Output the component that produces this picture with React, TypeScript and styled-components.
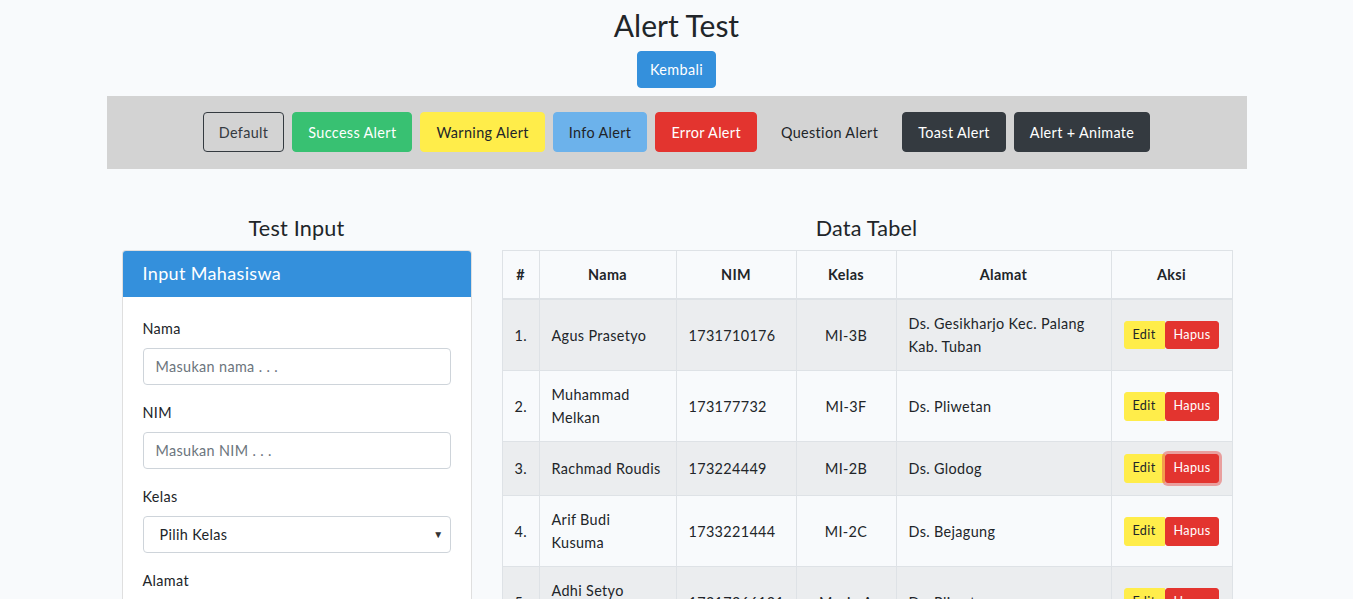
import React from "react";
import styled, { createGlobalStyle, css } from "styled-components";

const Global = createGlobalStyle`
  html, body { margin: 0; padding: 0; overflow: hidden; }
  body {
    background: #f8fafc;
    color: #212529;
    font-family: Lato, "Noto Sans", sans-serif;
    font-size: 14.4px;
    line-height: 1.6;
    letter-spacing: 0.35px;
  }
  * { box-sizing: border-box; }
`;

const Page = styled.div`
  padding-top: 7px;
`;

const Header = styled.header`
  display: flex;
  flex-direction: column;
  align-items: center;
`;

const Title = styled.h1`
  margin: 0 0 8px;
  font-size: 30px;
  font-weight: 400;
  line-height: 36px;
  letter-spacing: 0;
`;

const PrimaryButton = styled.button`
  font-family: inherit;
  font-size: 14.4px;
  letter-spacing: inherit;
  line-height: 1.6;
  padding: 6px 12px;
  border: 1px solid #3490dc;
  border-radius: 4px;
  background: #3490dc;
  color: #fff;
  margin-bottom: 8px;
`;

const Container = styled.div`
  width: 1140px;
  margin: 0 auto;
`;

const AlertBar = styled.div`
  background: #d3d3d3;
  display: flex;
  justify-content: center;
  gap: 8px;
  padding: 16px 0 17px;
`;

type Variant = "outline" | "success" | "warning" | "info" | "danger" | "plain" | "dark";

const variants: Record<Variant, ReturnType<typeof css>> = {
  outline: css`background: transparent; color: #343a40; border-color: #343a40;`,
  success: css`background: #38c172; color: #fff; border-color: #38c172;`,
  warning: css`background: #ffed4a; color: #212529; border-color: #ffed4a;`,
  info: css`background: #6cb2eb; color: #212529; border-color: #6cb2eb;`,
  danger: css`background: #e3342f; color: #fff; border-color: #e3342f;`,
  plain: css`background: transparent; color: #212529; border-color: transparent;`,
  dark: css`background: #343a40; color: #fff; border-color: #343a40;`,
};

const AlertButton = styled.button<{ $v: Variant }>`
  font-family: inherit;
  font-size: 14.4px;
  letter-spacing: inherit;
  line-height: 1.6;
  height: 40px;
  padding: 0 15px;
  border: 1px solid transparent;
  border-radius: 4px;
  ${(p) => variants[p.$v]}
`;

const Row = styled.div`
  display: grid;
  grid-template-columns: 350px 730px;
  column-gap: 30px;
  padding: 47px 15px 0;
  align-items: start;
`;

const Column = styled.section`
  display: flex;
  flex-direction: column;
`;

const SectionTitle = styled.h4`
  margin: 0 0 8px;
  font-size: 21.6px;
  font-weight: 400;
  line-height: 1.2;
  text-align: center;
  letter-spacing: 0.2px;
`;

const Card = styled.div`
  background: #fff;
  border: 1px solid rgba(0, 0, 0, 0.125);
  border-radius: 4px;
  overflow: hidden;
`;

const CardHeader = styled.h5`
  margin: 0;
  background: #3490dc;
  color: #fff;
  font-size: 18px;
  font-weight: 400;
  line-height: 1.2;
  padding: 12px 20px;
`;

const CardBody = styled.div`
  padding: 20px;
`;

const FormGroup = styled.div`
  margin-bottom: 16px;
`;

const Label = styled.label`
  display: block;
  margin-bottom: 8px;
`;

const fieldStyle = css`
  display: block;
  width: 100%;
  height: 37px;
  padding: 6px 12px;
  font-family: inherit;
  font-size: 14.4px;
  letter-spacing: inherit;
  line-height: 1.6;
  color: #495057;
  background: #fff;
  border: 1px solid #ced4da;
  border-radius: 4px;
`;

const Input = styled.input`
  ${fieldStyle}
  &::placeholder { color: #6c757d; }
`;

const SelectWrap = styled.div`
  position: relative;
`;

const Select = styled.select`
  ${fieldStyle}
  appearance: none;
  -webkit-appearance: none;
  padding-left: 16px;
  color: #212529;
`;

const SelectArrow = styled.span`
  position: absolute;
  right: 7px;
  top: 50%;
  transform: translateY(-50%);
  font-size: 10px;
  line-height: 1;
  color: #333;
  pointer-events: none;
`;

const Table = styled.table`
  width: 730px;
  table-layout: fixed;
  border-collapse: collapse;
  color: #212529;
`;

const Th = styled.th`
  border: 1px solid #dee2e6;
  border-bottom-width: 2px;
  padding: 12px;
  font-weight: 700;
  text-align: center;
  vertical-align: middle;
`;

const Tr = styled.tr<{ $striped: boolean }>`
  background: ${(p) => (p.$striped ? "rgba(0,0,0,0.05)" : "transparent")};
`;

const Td = styled.td<{ $center?: boolean }>`
  border: 1px solid #dee2e6;
  padding: 12px;
  vertical-align: middle;
  text-align: ${(p) => (p.$center ? "center" : "left")};
`;

const ActionGroup = styled.div`
  display: inline-flex;
  vertical-align: middle;
`;

const SmallButton = styled.button<{ $kind: "edit" | "delete"; $focus?: boolean }>`
  font-family: inherit;
  font-size: 12.6px;
  letter-spacing: inherit;
  line-height: 1.5;
  padding: 4px 8px;
  border: 1px solid transparent;
  ${(p) =>
    p.$kind === "edit"
      ? css`background: #ffed4a; color: #212529; border-color: #ffed4a; border-radius: 3px 0 0 3px;`
      : css`background: #e3342f; color: #fff; border-color: #e3342f; border-radius: 3px;`}
  ${(p) => p.$focus && css`box-shadow: 0 0 0 3px rgba(231, 82, 78, 0.5);`}
`;

const alerts: { label: string; v: Variant }[] = [
  { label: "Default", v: "outline" },
  { label: "Success Alert", v: "success" },
  { label: "Warning Alert", v: "warning" },
  { label: "Info Alert", v: "info" },
  { label: "Error Alert", v: "danger" },
  { label: "Question Alert", v: "plain" },
  { label: "Toast Alert", v: "dark" },
  { label: "Alert + Animate", v: "dark" },
];

const rows = [
  { nama: "Agus Prasetyo", nim: "1731710176", kelas: "MI-3B", alamat: "Ds. Gesikharjo Kec. Palang Kab. Tuban" },
  { nama: "Muhammad Melkan", nim: "173177732", kelas: "MI-3F", alamat: "Ds. Pliwetan" },
  { nama: "Rachmad Roudis", nim: "173224449", kelas: "MI-2B", alamat: "Ds. Glodog" },
  { nama: "Arif Budi Kusuma", nim: "1733221444", kelas: "MI-2C", alamat: "Ds. Bejagung" },
  { nama: "Adhi Setyo Nugroho", nim: "17217266121", kelas: "Mesin A", alamat: "Ds. Pliwetan" },
];

const colWidths = [37, 137, 120, 100, 215, 121];

export default function App() {
  return (
    <Page>
      <Global />
      <Header>
        <Title>Alert Test</Title>
        <PrimaryButton>Kembali</PrimaryButton>
      </Header>
      <Container>
        <AlertBar>
          {alerts.map((a) => (
            <AlertButton key={a.label} $v={a.v}>
              {a.label}
            </AlertButton>
          ))}
        </AlertBar>
        <Row>
          <Column>
            <SectionTitle>Test Input</SectionTitle>
            <Card>
              <CardHeader>Input Mahasiswa</CardHeader>
              <CardBody>
                <FormGroup>
                  <Label>Nama</Label>
                  <Input placeholder="Masukan nama . . ." />
                </FormGroup>
                <FormGroup>
                  <Label>NIM</Label>
                  <Input placeholder="Masukan NIM . . ." />
                </FormGroup>
                <FormGroup>
                  <Label>Kelas</Label>
                  <SelectWrap>
                    <Select defaultValue="">
                      <option value="">Pilih Kelas</option>
                    </Select>
                    <SelectArrow>▼</SelectArrow>
                  </SelectWrap>
                </FormGroup>
                <FormGroup>
                  <Label>Alamat</Label>
                  <Input placeholder="Masukan alamat . . ." />
                </FormGroup>
              </CardBody>
            </Card>
          </Column>
          <Column>
            <SectionTitle>Data Tabel</SectionTitle>
            <Table>
              <colgroup>
                {colWidths.map((w, i) => (
                  <col key={i} style={{ width: w }} />
                ))}
              </colgroup>
              <thead>
                <tr>
                  <Th>#</Th>
                  <Th>Nama</Th>
                  <Th>NIM</Th>
                  <Th>Kelas</Th>
                  <Th>Alamat</Th>
                  <Th>Aksi</Th>
                </tr>
              </thead>
              <tbody>
                {rows.map((r, i) => (
                  <Tr key={r.nim} $striped={i % 2 === 0}>
                    <Td>{i + 1}.</Td>
                    <Td>{r.nama}</Td>
                    <Td>{r.nim}</Td>
                    <Td $center>{r.kelas}</Td>
                    <Td>{r.alamat}</Td>
                    <Td $center>
                      <ActionGroup>
                        <SmallButton $kind="edit">Edit</SmallButton>
                        <SmallButton $kind="delete" $focus={i === 2}>
                          Hapus
                        </SmallButton>
                      </ActionGroup>
                    </Td>
                  </Tr>
                ))}
              </tbody>
            </Table>
          </Column>
        </Row>
      </Container>
    </Page>
  );
}
